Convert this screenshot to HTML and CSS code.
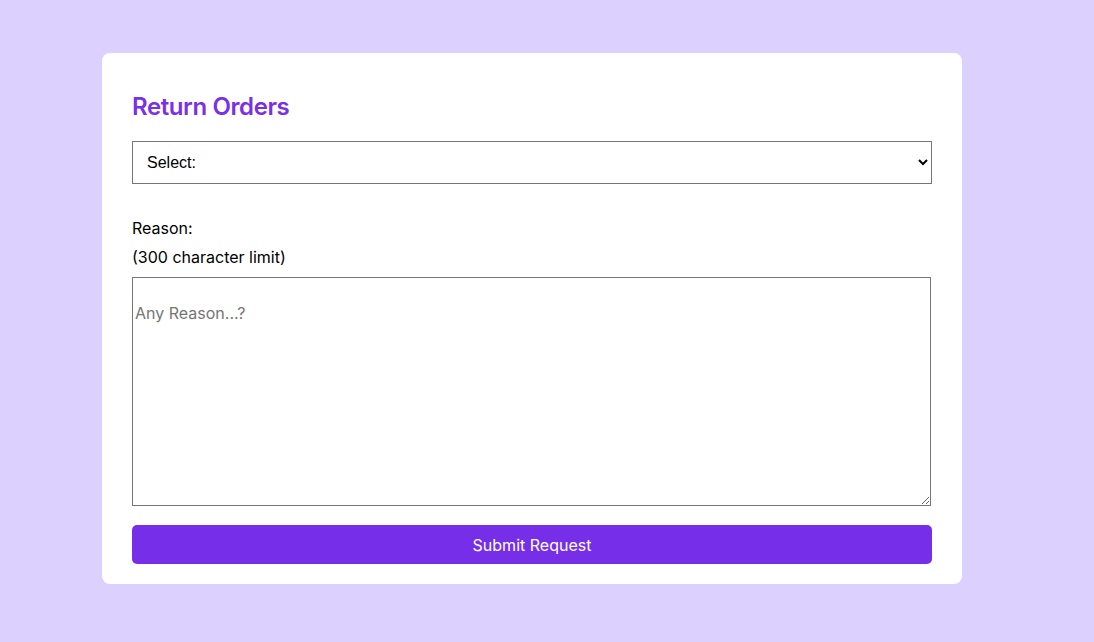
FILE: index.html
```html
<!DOCTYPE html>
<html>
<head>
<meta charset="utf-8">
<link rel="stylesheet" href="styles.css">
</head>
<body>
<main class="page">
  <form class="card">
    <h2 class="title">Return Orders</h2>
    <select class="select">
      <option>Select:</option>
    </select>
    <div class="labels">
      <label class="label">Reason:</label>
      <span class="label">(300 character limit)</span>
    </div>
    <textarea class="reason" placeholder="Any Reason...?"></textarea>
    <button type="button" class="submit">Submit Request</button>
  </form>
</main>
</body>
</html>
```
FILE: styles.css
```css
html, body {
  margin: 0;
  padding: 0;
}
body {
  background: #dcd1fe;
  font-family: "Inter", "Noto Sans", sans-serif;
  color: #000;
}
.page {
  padding-top: 53px;
  padding-left: 102px;
  height: 642px;
  box-sizing: border-box;
}
.card {
  width: 860px;
  box-sizing: border-box;
  background: #fff;
  border-radius: 8px;
  padding: 30px 30px 20px;
  display: flex;
  flex-direction: column;
}
.title {
  margin: 9px 0 0;
  font-size: 24px;
  font-weight: 600;
  line-height: 30px;
  color: #7a2fe8;
  letter-spacing: -0.4px;
}
.select {
  margin-top: 19px;
  height: 43px;
  width: 800px;
  border: 1px solid #767676;
  border-radius: 0;
  background: #fff;
  font-family: "Liberation Sans", Arial, sans-serif;
  font-size: 16px;
  padding: 0 10px;
  color: #000;
}
.labels {
  margin-top: 34px;
  display: flex;
  flex-direction: column;
  gap: 9px;
}
.label {
  font-size: 16px;
  line-height: 20px;
}
.reason {
  margin-top: 10px;
  width: 799px;
  height: 229px;
  box-sizing: border-box;
  border: 1px solid #767676;
  padding: 25px 2px 2px;
  font-family: "Inter", "Noto Sans", sans-serif;
  font-size: 16px;
  line-height: 20px;
  resize: vertical;
}
.reason::placeholder {
  color: #757575;
}
.submit {
  margin-top: 19px;
  height: 39px;
  width: 800px;
  border: none;
  border-radius: 5px;
  background: #772ee8;
  color: #fff;
  font-family: "Inter", "Noto Sans", sans-serif;
  font-size: 16px;
  cursor: pointer;
}
```
